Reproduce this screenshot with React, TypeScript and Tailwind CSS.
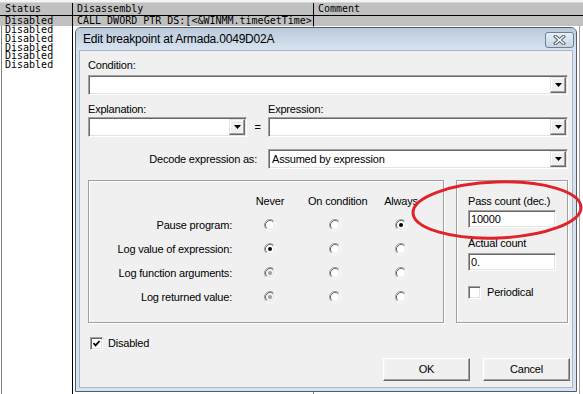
import React from 'react'

const ui = "font-['Liberation_Sans',Arial,sans-serif] text-[11px] tracking-[-0.2px] text-black"
const mono = "font-['DejaVu_Sans_Mono',monospace] text-[10px] text-black"

// classic sunken edge (inputs, combo boxes, check boxes)
const sunken =
  'border border-t-[#a0a0a0] border-l-[#a0a0a0] border-b-white border-r-white shadow-[inset_1px_1px_0_#696969,inset_-1px_-1px_0_#e3e3e3]'
// classic raised edge (push buttons)
const raised =
  'border border-t-white border-l-white border-b-[#696969] border-r-[#696969] shadow-[inset_-1px_-1px_0_#a0a0a0,inset_1px_1px_0_#f4f4f4]'

function Arrow() {
  return (
    <svg width="7" height="4" viewBox="0 0 7 4">
      <polygon points="0,0 7,0 3.5,4" fill="#000" />
    </svg>
  )
}

function Combo({ width, text }: { width: string; text?: string }) {
  return (
    <div className={`${width} h-[20px] flex bg-white p-[1px] ${sunken}`}>
      <div className="flex-1 pl-[2px] leading-[16px] truncate">{text}</div>
      <div
        className={`w-[16px] h-[16px] flex items-center justify-center bg-[#f0f0f0] border border-t-[#e3e3e3] border-l-[#e3e3e3] border-b-[#696969] border-r-[#696969] shadow-[inset_-1px_-1px_0_#a0a0a0,inset_1px_1px_0_#fff]`}
      >
        <Arrow />
      </div>
    </div>
  )
}

function Edit({ value }: { value: string }) {
  return (
    <div className={`w-[88px] h-[18px] bg-white pl-[2px] leading-[16px] ${sunken}`}>{value}</div>
  )
}

function Radio({ on, dis }: { on?: boolean; dis?: boolean }) {
  return (
    <svg width="12" height="12" viewBox="0 0 12 12">
      <circle cx="6" cy="6" r="4.5" fill={dis ? '#f0f0f0' : '#fff'} />
      <path d="M2.11 9.89A5.5 5.5 0 0 1 9.89 2.11" stroke="#a0a0a0" fill="none" />
      <path d="M9.89 2.11A5.5 5.5 0 0 1 2.11 9.89" stroke="#fff" fill="none" />
      <path d="M2.82 9.18A4.5 4.5 0 0 1 9.18 2.82" stroke="#696969" fill="none" />
      <path d="M9.18 2.82A4.5 4.5 0 0 1 2.82 9.18" stroke="#e3e3e3" fill="none" />
      {on && <circle cx="6" cy="6" r="2" fill={dis ? '#a0a0a0' : '#000'} />}
    </svg>
  )
}

function Check({ on }: { on?: boolean }) {
  return (
    <div className={`w-[13px] h-[13px] bg-white flex items-center justify-center ${sunken}`}>
      {on && (
        <svg width="9" height="9" viewBox="0 0 9 9">
          <path d="M1.5 4.2 L3.6 6.4 L7.6 2" stroke="#000" strokeWidth="1.7" fill="none" />
        </svg>
      )}
    </div>
  )
}

const rows: { label: string; sel: number; dis?: boolean }[] = [
  { label: 'Pause program:', sel: 2 },
  { label: 'Log value of expression:', sel: 0 },
  { label: 'Log function arguments:', sel: 0, dis: true },
  { label: 'Log returned value:', sel: 0, dis: true },
]

function Dialog() {
  return (
    <div className="absolute left-[75px] top-[27px] w-[502px] h-[365px] flex flex-col border border-[#4e5c6c] rounded-t-[6px] bg-[#d6e2ef] overflow-hidden">
      {/* title bar */}
      <div className="h-[22px] shrink-0 flex items-center pl-[7px] pr-[2px] bg-linear-to-b from-[#bac9da] to-[#d8e4f1]">
        <span className={`${ui} text-[12px] flex-1`}>Edit breakpoint at Armada.0049D02A</span>
        <div className="w-[29px] h-[16px] mt-[1px] rounded-[3px] border border-[#6f8194] bg-linear-to-b from-[#e9eff7] to-[#c7d4e3] flex items-center justify-center">
          <svg width="13" height="10" viewBox="0 0 13 10">
            <path d="M2.5 1.5 L10.5 8.5 M10.5 1.5 L2.5 8.5" stroke="#55636f" strokeWidth="3.4" strokeLinecap="square" fill="none" />
            <path d="M2.5 1.5 L10.5 8.5 M10.5 1.5 L2.5 8.5" stroke="#fff" strokeWidth="1.5" strokeLinecap="square" fill="none" />
          </svg>
        </div>
      </div>

      {/* frame + client */}
      <div className="flex-1 px-[3px] pb-[3px] flex">
        <div className={`flex-1 bg-[#f0f0f0] border border-[#a8b7c8] pl-[8px] pr-[3px] flex flex-col ${ui}`}>
          <div className="mt-[8px] leading-[13px]">Condition:</div>
          <div className="mt-[3px]">
            <Combo width="w-[480px]" />
          </div>

          <div className="mt-[8px] flex">
            <div className="w-[159px] flex flex-col">
              <div className="leading-[13px]">Explanation:</div>
              <div className="mt-[1px]">
                <Combo width="w-[159px]" />
              </div>
            </div>
            <div className="w-[21px] pt-[14px] flex items-center justify-center h-[34px]">=</div>
            <div className="w-[300px] flex flex-col">
              <div className="leading-[13px]">Expression:</div>
              <div className="mt-[1px]">
                <Combo width="w-[300px]" />
              </div>
            </div>
          </div>

          <div className="mt-[12px] flex items-center">
            <div className="w-[169px] text-right">Decode expression as:</div>
            <div className="ml-[11px]">
              <Combo width="w-[300px]" text="Assumed by expression" />
            </div>
          </div>

          <div className="mt-[11px] flex gap-[12px] h-[143px]">
            {/* action group */}
            <div className="w-[356px] border border-[#a0a0a0] shadow-[inset_1px_1px_0_#fff,1px_1px_0_#fff]">
              <div className="grid grid-cols-[143px_76px_54px_78px] auto-rows-[24px] items-center pt-[8px]">
                <div />
                <div className="text-center whitespace-nowrap">Never</div>
                <div className="text-center whitespace-nowrap">On condition</div>
                <div className="text-center whitespace-nowrap">Always</div>
                {rows.map((r) => (
                  <React.Fragment key={r.label}>
                    <div className="text-right whitespace-nowrap">{r.label}</div>
                    {[0, 1, 2].map((c) => (
                      <div key={c} className="flex justify-center">
                        <Radio on={r.sel === c} dis={r.dis && c === 0} />
                      </div>
                    ))}
                  </React.Fragment>
                ))}
              </div>
            </div>

            {/* count group */}
            <div className="w-[112px] border border-[#a0a0a0] shadow-[inset_1px_1px_0_#fff,1px_1px_0_#fff] pl-[11px] pt-[14px] flex flex-col">
              <div className="leading-[13px]">Pass count (dec.)</div>
              <div className="mt-[2px]">
                <Edit value="10000" />
              </div>
              <div className="mt-[9px] leading-[13px]">Actual count</div>
              <div className="mt-[3px]">
                <Edit value="0." />
              </div>
              <div className="mt-[15px] flex items-center gap-[6px]">
                <Check />
                <span className="leading-[13px]">Periodical</span>
              </div>
            </div>
          </div>

          <div className="mt-[14px] pl-[2px] flex items-center gap-[5px]">
            <Check on />
            <span className="leading-[13px]">Disabled</span>
          </div>

          <div className="mt-[8px] flex justify-end gap-[13px] -mr-[1px]">
            <div className={`w-[87px] h-[23px] bg-[#f0f0f0] flex items-center justify-center ${raised}`}>OK</div>
            <div className={`w-[87px] h-[23px] bg-[#f0f0f0] flex items-center justify-center ${raised}`}>Cancel</div>
          </div>
        </div>
      </div>
    </div>
  )
}

export default function App() {
  return (
    <div className="relative w-[583px] h-[394px] overflow-hidden bg-white">
      {/* debugger breakpoint list behind the dialog */}
      <div className={`flex flex-col h-full ${mono}`}>
        <div className="h-[3px] bg-[#f4f4f4] border-b border-[#d8d8d8]" />
        <div className="h-[13px] flex bg-[#c0c0c0] border-b border-black leading-[12px]">
          <div className="w-[73px] border-r border-black pl-[5px]">Status</div>
          <div className="w-[241px] border-r border-black pl-[4px]">Disassembly</div>
          <div className="flex-1 pl-[4px]">Comment</div>
        </div>
        <div className="h-[10px] flex bg-[#c0c0c0] leading-[10px]">
          <div className="w-[73px] border-r border-black pl-[5px]">Disabled</div>
          <div className="w-[241px] border-r border-black pl-[4px] whitespace-nowrap">
            CALL DWORD PTR DS:[&lt;&amp;WINMM.timeGetTime&gt;
          </div>
          <div className="flex-1" />
        </div>
        <div className="flex-1 flex">
          <div className="w-[73px] border-r border-black flex">
            <div className="w-[2px] border-r border-[#808080]" />
            <div className="pl-[3px] leading-[8.8px]">
              <div>Disabled</div>
              <div>Disabled</div>
              <div>Disabled</div>
              <div>Disabled</div>
              <div>Disabled</div>
            </div>
          </div>
          <div className="w-[241px] border-r border-[#808080]" />
          <div className="flex-1 flex justify-end pr-[3px]">
            <div className="w-[1px] bg-[#a0a0a0]" />
          </div>
        </div>
      </div>

      <Dialog />

      {/* red marker ellipse */}
      <svg className="absolute inset-0 pointer-events-none" width="583" height="394" viewBox="0 0 583 394">
        <ellipse
          cx="497"
          cy="210"
          rx="84"
          ry="28"
          transform="rotate(-2 497 210)"
          fill="none"
          stroke="#e2222b"
          strokeWidth="3"
        />
      </svg>
    </div>
  )
}
